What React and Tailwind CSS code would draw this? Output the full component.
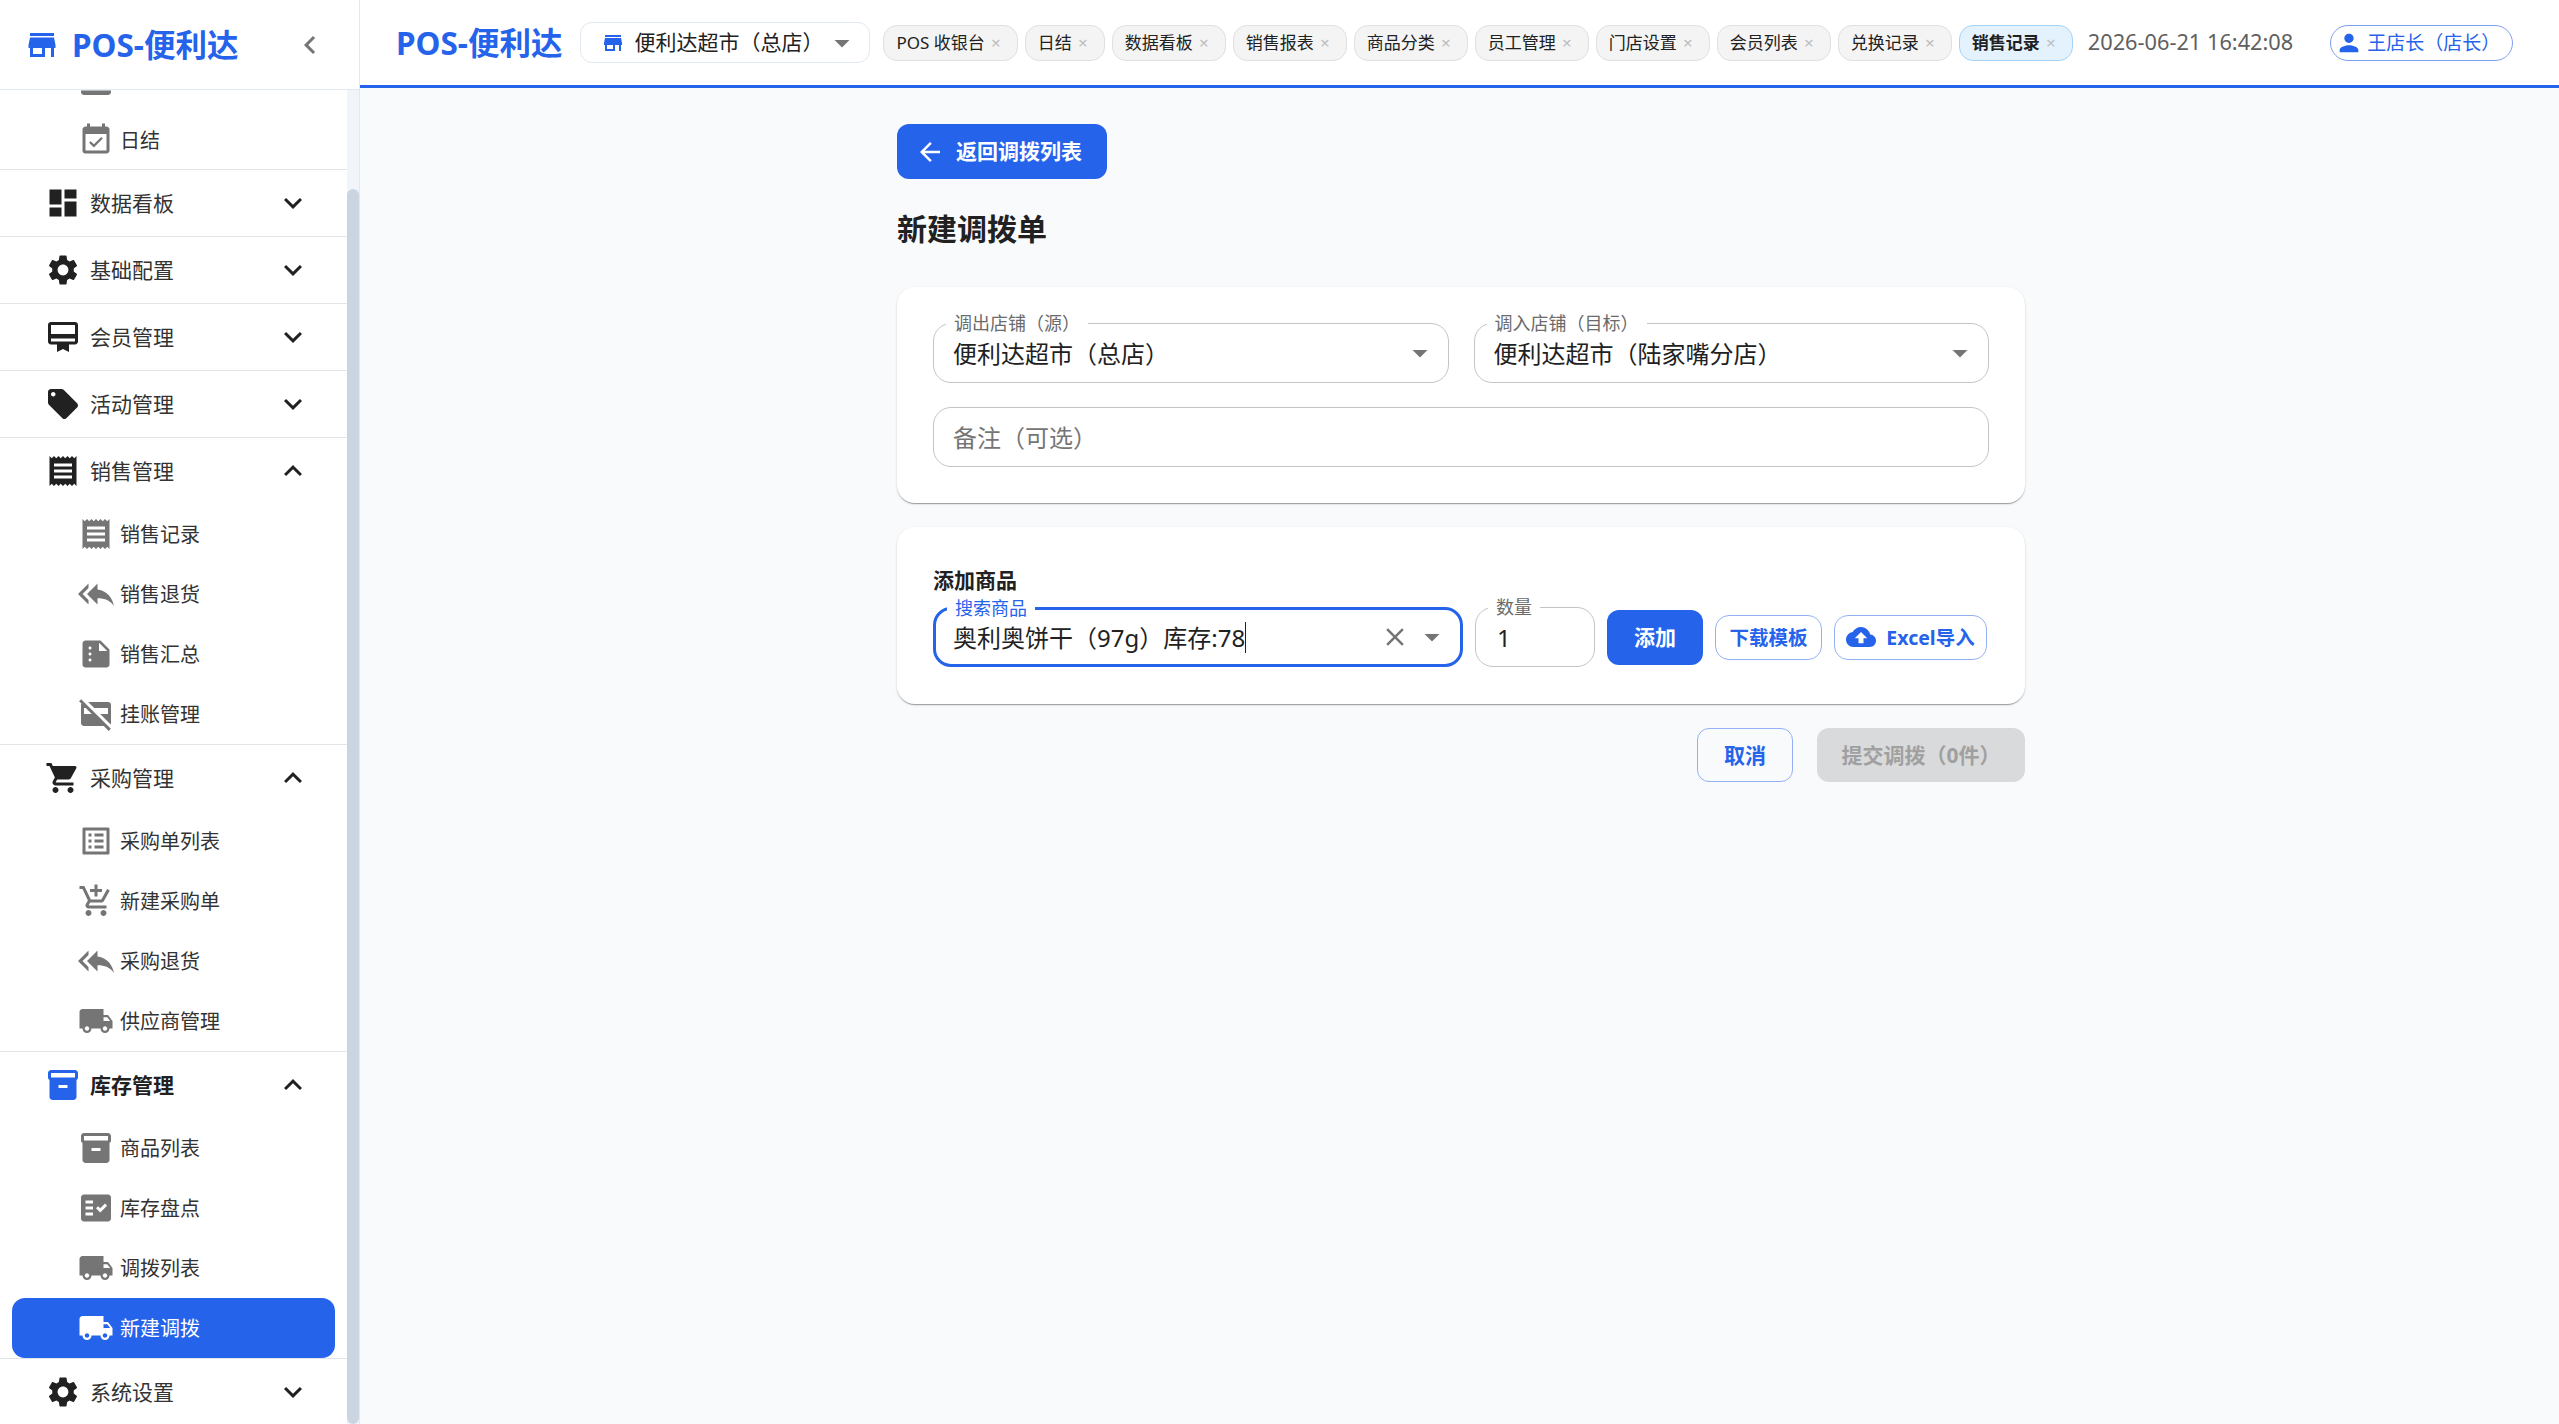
import React from "react";
import {
  MdStore, MdChevronLeft, MdEventAvailable, MdDashboard, MdSettings, MdCardMembership, MdLocalOffer,
  MdReceipt, MdReplyAll, MdSummarize, MdCreditCardOff, MdShoppingCart, MdListAlt, MdAddShoppingCart,
  MdLocalShipping, MdInventory2, MdFactCheck, MdExpandMore, MdExpandLess, MdArrowDropDown, MdArrowBack,
  MdPerson, MdClose, MdCloudUpload, MdPointOfSale,
} from "react-icons/md";

const chips = ["POS 收银台", "日结", "数据看板", "销售报表", "商品分类", "员工管理", "门店设置", "会员列表", "兑换记录"];

const sections = [
  { name: "数据看板", icon: MdDashboard },
  { name: "基础配置", icon: MdSettings },
  { name: "会员管理", icon: MdCardMembership },
  { name: "活动管理", icon: MdLocalOffer },
  {
    name: "销售管理", icon: MdReceipt, open: true,
    items: [
      { name: "销售记录", icon: MdReceipt },
      { name: "销售退货", icon: MdReplyAll },
      { name: "销售汇总", icon: MdSummarize },
      { name: "挂账管理", icon: MdCreditCardOff },
    ],
  },
  {
    name: "采购管理", icon: MdShoppingCart, open: true,
    items: [
      { name: "采购单列表", icon: MdListAlt },
      { name: "新建采购单", icon: MdAddShoppingCart },
      { name: "采购退货", icon: MdReplyAll },
      { name: "供应商管理", icon: MdLocalShipping },
    ],
  },
  {
    name: "库存管理", icon: MdInventory2, open: true, current: true,
    items: [
      { name: "商品列表", icon: MdInventory2 },
      { name: "库存盘点", icon: MdFactCheck },
      { name: "调拨列表", icon: MdLocalShipping },
      { name: "新建调拨", icon: MdLocalShipping, active: true },
    ],
  },
];

function SubItem({ item }) {
  const Icon = item.icon;
  if (item.active) {
    return (
      <div className="mx-[12px] flex h-[60px] items-center rounded-[13px] bg-[#2563eb] pl-[66px] text-white">
        <Icon size={36} className="shrink-0" />
        <span className="ml-[6px] pt-[2px] text-[20px]">{item.name}</span>
      </div>
    );
  }
  return (
    <div className="flex h-[60px] items-center pl-[78px]">
      <Icon size={36} className="shrink-0 text-[#757575]" />
      <span className="ml-[6px] pt-[2px] text-[20px] text-[#333333]">{item.name}</span>
    </div>
  );
}

function Section({ section, last }) {
  const Icon = section.icon;
  const Chevron = section.open ? MdExpandLess : MdExpandMore;
  return (
    <div className={last ? "" : "border-b border-[#e2e4e8]"}>
      <div className="flex h-[66px] items-center pl-[45px] pr-[36px]">
        <Icon size={36} className={section.current ? "shrink-0 text-[#2563eb]" : "shrink-0 text-[#212121]"} />
        <span className={section.current ? "ml-[9px] flex-1 pt-[2px] text-[21px] font-bold text-[#212121]" : "ml-[9px] flex-1 pt-[2px] text-[21px] text-[#333333]"}>
          {section.name}
        </span>
        <Chevron size={36} className="shrink-0 text-[#212121]" />
      </div>
      {section.items && section.items.map((item) => <SubItem key={item.name} item={item} />)}
    </div>
  );
}

function Sidebar() {
  return (
    <aside className="flex h-full w-[360px] shrink-0 flex-col border-r border-[#e2e8f0] bg-white">
      <div className="flex h-[90px] shrink-0 items-center border-b border-[#e2e8f0] pl-[24px] pr-[31px]">
        <MdStore size={36} className="shrink-0 text-[#2563eb]" />
        <span className="ml-[12px] flex-1 text-[31.5px] font-bold leading-none text-[#2563eb]">POS-便利达</span>
        <MdChevronLeft size={36} className="text-[#757575]" />
      </div>
      <div className="flex min-h-0 flex-1">
        <nav className="min-w-0 flex-1 overflow-hidden">
          <div className="flex h-[20px] items-end overflow-hidden pl-[78px]">
            <div className="flex h-[60px] shrink-0 items-center">
              <MdPointOfSale size={36} className="shrink-0 text-[#757575]" />
            </div>
          </div>
          <div className="border-b border-[#e2e4e8]">
            <div className="flex h-[59px] items-center pl-[78px]">
              <MdEventAvailable size={36} className="shrink-0 text-[#757575]" />
              <span className="ml-[6px] pt-[2px] text-[20px] text-[#333333]">日结</span>
            </div>
          </div>
          {sections.map((s) => <Section key={s.name} section={s} />)}
          <Section section={{ name: "系统设置", icon: MdSettings }} last />
        </nav>
        <div className="w-[12px] shrink-0 bg-[#f1f5f9] pt-[99px]">
          <div className="h-full rounded-[6px] bg-[#cbd5e1]" />
        </div>
      </div>
    </aside>
  );
}

function Chip({ label, active }) {
  return (
    <div className={active
      ? "flex h-[36px] items-center rounded-[14px] border border-[#a5d3fa] bg-[#e3f2fd] pl-[12px] pr-[15px] text-[17px] font-bold text-[#212121]"
      : "flex h-[36px] items-center rounded-[14px] border border-[#e0e0e0] bg-[#f4f4f4] pl-[12px] pr-[15px] text-[17px] text-[#212121]"}>
      <span className="whitespace-nowrap">{label}</span>
      <span className="ml-[5px] w-[12px] text-center text-[17px] font-normal leading-none text-[#bdbdbd]">×</span>
    </div>
  );
}

function TopBar() {
  return (
    <header className="flex h-[88px] shrink-0 items-center border-b-[3px] border-[#2563eb] bg-white pl-[36px]">
      <span className="whitespace-nowrap text-[31.5px] font-bold leading-none text-[#2563eb]">POS-便利达</span>
      <div className="ml-[18px] flex h-[41px] w-[290px] shrink-0 items-center rounded-[12px] border border-[#e2e8f0] pl-[20px]">
        <MdStore size={24} className="shrink-0 text-[#2563eb]" />
        <span className="ml-[9px] flex-1 whitespace-nowrap pt-[1px] text-[21px] text-[#212121]">便利达超市（总店）</span>
        <MdArrowDropDown size={36} className="mr-[9px] shrink-0 text-[#757575]" />
      </div>
      <div className="ml-[13px] flex items-center gap-[7px]">
        {chips.map((c) => <Chip key={c} label={c} />)}
        <Chip label="销售记录" active />
      </div>
      <span className="ml-[15px] whitespace-nowrap text-[21.75px] text-[#5f5f5f]">2026-06-21 16:42:08</span>
      <div className="ml-[37px] flex h-[36px] w-[183px] shrink-0 items-center rounded-full border border-[#7c9ff0] pl-[4px] text-[#2563eb]">
        <MdPerson size={28} className="shrink-0" />
        <span className="ml-[4px] whitespace-nowrap pt-[1px] text-[19px]">王店长（店长）</span>
      </div>
    </header>
  );
}

function Field({ label, focused, className, children }) {
  return (
    <div className={(focused ? "border-[3px] border-[#2563eb] " : "border border-[#c4c4c4] ") + "relative flex h-[60px] items-center rounded-[18px] bg-white " + className}>
      {label && (
        <span className={(focused ? "left-[11px] -top-[2px] text-[#2563eb] " : "left-[12px] -top-[1px] text-[#6b6b6b] ") + "absolute -translate-y-1/2 whitespace-nowrap bg-white px-[8px] text-[18px] leading-[20px]"}>
          {label}
        </span>
      )}
      {children}
    </div>
  );
}

function SelectField({ label, value, className }) {
  return (
    <Field label={label} className={"pl-[19px] pr-[10px] " + className}>
      <span className="flex-1 whitespace-nowrap pt-[2px] text-[24px] text-[#212121]">{value}</span>
      <MdArrowDropDown size={36} className="shrink-0 text-[#757575]" />
    </Field>
  );
}

function Card({ className, children }) {
  return (
    <section className={"rounded-[18px] bg-white shadow-[0_2px_1px_-1px_rgba(0,0,0,0.2),0_1px_1px_0_rgba(0,0,0,0.14),0_1px_3px_0_rgba(0,0,0,0.12)] " + className}>
      {children}
    </section>
  );
}

function Content() {
  return (
    <main className="min-h-0 flex-1 overflow-hidden bg-[#f8fafc] pt-[36px]">
      <div className="ml-[537px] w-[1128px]">
        <button className="flex h-[55px] w-[210px] items-center rounded-[12px] bg-[#2563eb] pl-[18px] text-white">
          <MdArrowBack size={30} className="shrink-0" />
          <span className="ml-[11px] whitespace-nowrap pt-[1px] text-[21px] font-bold">返回调拨列表</span>
        </button>
        <h1 className="mt-[26px] text-[30px] font-bold leading-[48px] text-[#212121]">新建调拨单</h1>
        <Card className="mt-[34px] flex flex-col gap-[24px] p-[36px]">
          <div className="flex gap-[25px]">
            <SelectField label="调出店铺（源）" value="便利达超市（总店）" className="flex-1" />
            <SelectField label="调入店铺（目标）" value="便利达超市（陆家嘴分店）" className="flex-1" />
          </div>
          <Field className="pl-[19px]">
            <span className="pt-[2px] text-[24px] text-[#757575]">备注（可选）</span>
          </Field>
        </Card>
        <Card className="mt-[24px] h-[177px] px-[36px] pt-[38px]">
          <h2 className="text-[21px] font-bold leading-[30px] text-[#212121]">添加商品</h2>
          <div className="mt-[12px] flex items-center">
            <Field label="搜索商品" focused className="w-[530px] shrink-0 pl-[17px] pr-[10px]">
              <span className="whitespace-nowrap pt-[2px] text-[24px] text-[#212121]">奥利奥饼干（97g）库存:78</span>
              <span className="h-[31px] w-px shrink-0 bg-[#212121]" />
              <span className="flex-1" />
              <MdClose size={30} className="shrink-0 text-[#757575]" />
              <MdArrowDropDown size={36} className="ml-[4px] shrink-0 text-[#757575]" />
            </Field>
            <Field label="数量" className="ml-[12px] w-[120px] shrink-0 pl-[21px]">
              <span className="pt-[2px] text-[24px] text-[#212121]">1</span>
            </Field>
            <button className="ml-[12px] h-[55px] w-[96px] shrink-0 rounded-[12px] bg-[#2563eb] pt-[2px] text-[21px] font-bold text-white">添加</button>
            <button className="ml-[12px] h-[45px] w-[107px] shrink-0 rounded-[14px] border border-[#92b1f5] pt-[2px] text-[19.5px] font-bold text-[#2563eb]">下载模板</button>
            <button className="ml-[12px] flex h-[45px] w-[153px] shrink-0 items-center justify-center gap-[10px] rounded-[14px] border border-[#92b1f5] text-[19.5px] font-bold text-[#2563eb]">
              <MdCloudUpload size={30} className="shrink-0" />
              <span className="whitespace-nowrap pt-[2px]">Excel导入</span>
            </button>
          </div>
        </Card>
        <div className="mt-[24px] flex justify-end gap-[24px]">
          <button className="h-[54px] w-[96px] rounded-[12px] border border-[#92b1f5] pt-[2px] text-[21px] font-bold text-[#2563eb]">取消</button>
          <button className="h-[54px] w-[208px] rounded-[12px] bg-[#d9dadc] pt-[2px] text-[21px] font-bold text-[#a0a0a0]">提交调拨（0件）</button>
        </div>
      </div>
    </main>
  );
}

export default function App() {
  return (
    <div className="flex h-screen w-full overflow-hidden bg-[#f8fafc] font-['Noto_Sans','Noto_Sans_CJK_SC',sans-serif]">
      <Sidebar />
      <div className="flex min-w-0 flex-1 flex-col">
        <TopBar />
        <Content />
      </div>
    </div>
  );
}
